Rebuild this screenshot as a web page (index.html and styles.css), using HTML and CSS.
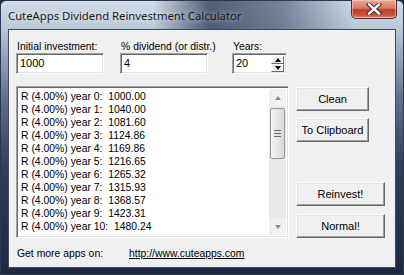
FILE: index.html
```html
<!DOCTYPE html>
<html lang="en">
<head>
    <meta charset="UTF-8">
    <title>CuteApps Dividend Reinvestment Calculator</title>
    <link rel="stylesheet" href="styles.css">
</head>
<body>
    <div class="window">
        <div class="titlebar">
            <span class="title">CuteApps Dividend Reinvestment Calculator</span>
            <div class="close-btn">
                <svg width="16" height="12" viewBox="0 0 16 12">
                    <path d="M3 1.5 L13 10.5 M13 1.5 L3 10.5" stroke="#3b2a2a" stroke-width="4.4" stroke-linecap="square"/>
                    <path d="M3 1.5 L13 10.5 M13 1.5 L3 10.5" stroke="#ffffff" stroke-width="2.4" stroke-linecap="square"/>
                </svg>
            </div>
        </div>

        <div class="client">
            <div class="fields">
                <div class="field field-initial">
                    <label>Initial investment:</label>
                    <div class="edit">1000</div>
                </div>
                <div class="field field-dividend">
                    <label>% dividend (or distr.)</label>
                    <div class="edit">4</div>
                </div>
                <div class="field field-years">
                    <label>Years:</label>
                    <div class="edit edit-spin">
                        <span>20</span>
                        <div class="spin">
                            <div class="spin-btn"><span class="tri-up"></span></div>
                            <div class="spin-btn"><span class="tri-down"></span></div>
                        </div>
                    </div>
                </div>
            </div>

            <div class="main">
                <div class="listbox">
                    <div class="list-rows">
                        <div class="row">R (4.00%) year 0:  1000.00</div>
                        <div class="row">R (4.00%) year 1:  1040.00</div>
                        <div class="row">R (4.00%) year 2:  1081.60</div>
                        <div class="row">R (4.00%) year 3:  1124.86</div>
                        <div class="row">R (4.00%) year 4:  1169.86</div>
                        <div class="row">R (4.00%) year 5:  1216.65</div>
                        <div class="row">R (4.00%) year 6:  1265.32</div>
                        <div class="row">R (4.00%) year 7:  1315.93</div>
                        <div class="row">R (4.00%) year 8:  1368.57</div>
                        <div class="row">R (4.00%) year 9:  1423.31</div>
                        <div class="row">R (4.00%) year 10:  1480.24</div>
                    </div>
                    <div class="scrollbar">
                        <div class="sb-arrow"><span class="sb-tri-up"></span></div>
                        <div class="sb-track">
                            <div class="sb-thumb">
                                <span class="grip"></span>
                                <span class="grip"></span>
                                <span class="grip"></span>
                            </div>
                        </div>
                        <div class="sb-arrow"><span class="sb-tri-down"></span></div>
                    </div>
                </div>

                <div class="buttons">
                    <button class="btn btn-small">Clean</button>
                    <button class="btn btn-small btn-clipboard">To Clipboard</button>
                    <button class="btn btn-wide btn-reinvest">Reinvest!</button>
                    <button class="btn btn-wide btn-normal">Normal!</button>
                </div>
            </div>

            <div class="footer">
                <span class="footer-label">Get more apps on:</span>
                <a href="#" class="footer-link">http://www.cuteapps.com</a>
            </div>
        </div>
    </div>
</body>
</html>
```

FILE: styles.css
```css
body {
    margin: 0;
    background-color: #1f2a42;
}

.window {
    width: 404px;
    height: 275px;
    box-sizing: border-box;
    display: flex;
    flex-direction: column;
    border: 1px solid #2c3852;
    border-radius: 6px 6px 0 0;
    background:
        linear-gradient(90deg, rgba(255, 255, 255, 0) 38%, rgba(38, 52, 82, 0.75) 52%, rgba(60, 74, 104, 0.6) 70%, rgba(255, 255, 255, 0) 88%) top / 100% 29px no-repeat,
        linear-gradient(180deg, #d2dce7 0%, #bac8d8 10%, #62718d 35%, #323f5c 60%, #1d2842 100%);
}

.titlebar {
    height: 28px;
    display: flex;
    justify-content: space-between;
    align-items: flex-start;
}

.title {
    font-family: "Noto Sans", sans-serif;
    font-size: 11.3px;
    color: #1a1a1a;
    margin: 7px 0 0 7px;
    text-shadow: 0 0 6px rgba(255, 255, 255, 0.8);
}

.close-btn {
    width: 46px;
    height: 19px;
    box-sizing: border-box;
    margin: -1px 6px 0 0;
    display: flex;
    justify-content: center;
    align-items: center;
    border: 1px solid #5a2a22;
    border-top: none;
    border-radius: 0 0 5px 5px;
    background: linear-gradient(180deg, #e9aa9a 0%, #d77a66 45%, #c03a22 55%, #c9553e 85%, #e0907a 100%);
    box-shadow: inset 0 0 0 1px rgba(255, 220, 210, 0.5);
}

.client {
    flex: 1;
    margin: 0 7px 6px 7px;
    box-sizing: border-box;
    border: 1px solid #3e4a64;
    background-color: #f0f0f0;
    padding: 10px 0 0 7px;
    font-family: "Liberation Sans", Arial, sans-serif;
    font-size: 10.4px;
    color: #000000;
    display: flex;
    flex-direction: column;
}

.fields {
    display: flex;
}

.field label {
    display: block;
    height: 13px;
    line-height: 13px;
    padding-left: 1px;
}

.field-initial {
    width: 104px;
}

.field-dividend {
    width: 112px;
}

.edit {
    width: 88px;
    height: 21px;
    box-sizing: border-box;
    border: 1px solid;
    border-color: #a0a0a0 #ffffff #ffffff #a0a0a0;
    box-shadow: inset 1px 1px 0 #696969, inset -1px -1px 0 #e3e3e3;
    background-color: #ffffff;
    padding: 0 0 0 3px;
    line-height: 19px;
    font-size: 11px;
}

.edit-spin {
    width: 55px;
    display: flex;
    justify-content: space-between;
    padding-right: 2px;
}

.spin {
    width: 13px;
    padding-top: 2px;
    display: flex;
    flex-direction: column;
}

.spin-btn {
    height: 8px;
    box-sizing: border-box;
    border: 1px solid;
    border-color: #ffffff #696969 #696969 #ffffff;
    background-color: #f0f0f0;
    display: flex;
    justify-content: center;
    align-items: center;
}

.tri-up {
    border-left: 3.5px solid transparent;
    border-right: 3.5px solid transparent;
    border-bottom: 4px solid #000000;
}

.tri-down {
    border-left: 3.5px solid transparent;
    border-right: 3.5px solid transparent;
    border-top: 4px solid #000000;
}

.main {
    display: flex;
    margin-top: 12px;
}

.listbox {
    width: 273px;
    height: 152px;
    box-sizing: border-box;
    display: flex;
    border: 1px solid;
    border-color: #a0a0a0 #ffffff #ffffff #a0a0a0;
    box-shadow: inset 1px 1px 0 #696969, inset -1px -1px 0 #e3e3e3;
    background-color: #ffffff;
    padding: 2px 2px 2px 2px;
}

.list-rows {
    flex: 1;
    padding: 1px 0 0 2px;
}

.row {
    height: 13px;
    line-height: 13px;
    white-space: pre;
}

.scrollbar {
    width: 17px;
    display: flex;
    flex-direction: column;
    background-color: #f0f0f0;
}

.sb-arrow {
    height: 17px;
    display: flex;
    justify-content: center;
    align-items: center;
}

.sb-tri-up {
    border-left: 3.5px solid transparent;
    border-right: 3.5px solid transparent;
    border-bottom: 4px solid #8a8a8a;
}

.sb-tri-down {
    border-left: 3.5px solid transparent;
    border-right: 3.5px solid transparent;
    border-top: 4px solid #8a8a8a;
}

.sb-track {
    flex: 1;
    background-color: #e9e9e9;
}

.sb-thumb {
    height: 51px;
    margin: 2px 1px 0 1px;
    box-sizing: border-box;
    border: 1px solid #979797;
    border-radius: 2px;
    background: linear-gradient(90deg, #f4f4f4 0%, #e6e6e6 50%, #d8d8d8 100%);
    display: flex;
    flex-direction: column;
    justify-content: center;
    align-items: center;
    gap: 2px;
}

.grip {
    width: 7px;
    height: 1px;
    background-color: #6a6a6a;
}

.buttons {
    display: flex;
    flex-direction: column;
    align-items: flex-start;
    margin-left: 7px;
    padding-top: 1px;
}

.btn {
    height: 24px;
    box-sizing: border-box;
    border: 1px solid;
    border-color: #ffffff #696969 #696969 #ffffff;
    box-shadow: inset -1px -1px 0 #a0a0a0, inset 1px 1px 0 #e3e3e3;
    background-color: #f0f0f0;
    font-family: "Liberation Sans", Arial, sans-serif;
    font-size: 11px;
    color: #000000;
    padding: 0;
}

.btn-small {
    width: 73px;
}

.btn-clipboard {
    margin-top: 7px;
}

.btn-wide {
    width: 89px;
}

.btn-reinvest {
    margin-top: 40px;
}

.btn-normal {
    margin-top: 8px;
}

.footer {
    display: flex;
    margin-top: 9px;
    line-height: 13px;
}

.footer-label {
    width: 112px;
    padding-left: 1px;
}

.footer-link {
    color: #000000;
    text-decoration: underline;
}
```
